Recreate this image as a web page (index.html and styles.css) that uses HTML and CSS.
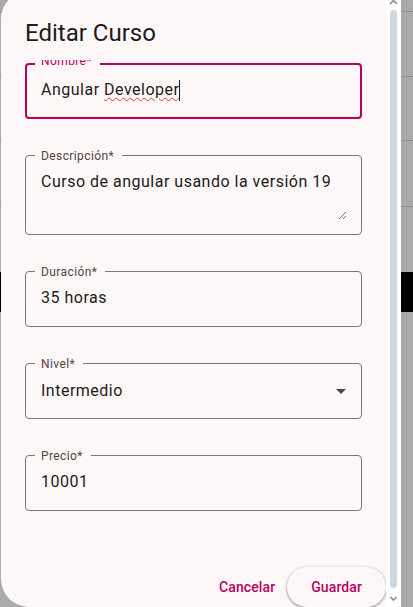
FILE: index.html
```html
<!DOCTYPE html>
<html lang="es">
<head>
<meta charset="utf-8">
<title>Editar Curso</title>
<link rel="stylesheet" href="styles.css">
</head>
<body>
<div class="screen">
  <div class="dialog">
    <h2 class="title">Editar Curso</h2>
    <div class="content">
      <div class="field focused">
        <span class="label">Nombre*</span>
        <div class="value">Angular <span class="typo">Developer</span><span class="caret"></span></div>
      </div>
      <div class="field area">
        <span class="label">Descripción*</span>
        <div class="value">Curso de angular usando la versión 19</div>
        <svg class="grip" width="8" height="8" viewBox="0 0 8 8"><path d="M1 8 L8 1 M5 8 L8 5" stroke="#6f6f6f" stroke-width="1" fill="none"/></svg>
      </div>
      <div class="field">
        <span class="label">Duración*</span>
        <div class="value">35 horas</div>
      </div>
      <div class="field select">
        <span class="label">Nivel*</span>
        <div class="value">Intermedio</div>
        <span class="arrow"></span>
      </div>
      <div class="field">
        <span class="label">Precio*</span>
        <div class="value">10001</div>
      </div>
    </div>
    <div class="actions">
      <button class="btn-text">Cancelar</button>
      <button class="btn-elev">Guardar</button>
    </div>
  </div>
  <div class="scrollbar">
    <svg class="sb-up" width="15" height="8" viewBox="0 0 15 8"><path d="M4 4 L7.5 0.5 L11 4" stroke="#8a8a8a" stroke-width="1.6" fill="none"/></svg>
    <div class="thumb"></div>
    <svg class="sb-down" width="15" height="19" viewBox="0 0 15 19"><path d="M4.5 9 L7.5 12 L10.5 9" stroke="#8a8a8a" stroke-width="1.6" fill="none"/></svg>
  </div>
  <div class="rest"></div>
</div>
</body>
</html>
```
FILE: styles.css
```css
* { box-sizing: border-box; }
html, body { margin: 0; height: 607px; overflow: hidden; }
body {
  font-family: Roboto, "Noto Sans", sans-serif;
  background: linear-gradient(to bottom,
    #aaaaaa 0 11px, #8f8f8f 11px 12px,
    #aaaaaa 12px 76px, #8f8f8f 76px 77px,
    #aaaaaa 77px 140px, #8f8f8f 140px 141px,
    #aaaaaa 141px 206px, #8f8f8f 206px 207px,
    #aaaaaa 207px 272px, #000000 272px 312px,
    #aaaaaa 312px 607px);
}
.screen { display: flex; height: 607px; padding-left: 1px; }
.dialog {
  flex: none;
  width: 385px;
  height: 616px;
  margin-top: -9px;
  background: #fdf7f7;
  border-radius: 28px 0 0 28px;
  display: flex;
  flex-direction: column;
  overflow: hidden;
}
.title {
  margin: 0;
  flex: none;
  height: 69px;
  padding: 26px 24px 0;
  font-size: 24px;
  line-height: 32px;
  font-weight: 400;
  color: #1f1a1c;
}
.content {
  flex: 1;
  overflow: hidden;
  padding: 3px 24px 0;
  display: flex;
  flex-direction: column;
  gap: 36px;
}
.field {
  position: relative;
  flex: none;
  height: 56px;
  border: 1px solid #857375;
  border-radius: 4px;
  padding: 14px 15px;
}
.field.focused { border: 2px solid #b8005c; padding: 13px 14px; }
.field.area { height: 80px; display: flex; flex-direction: column; padding-bottom: 15px; }
.field.select { display: flex; align-items: center; justify-content: space-between; padding-top: 0; padding-bottom: 0; }
.label {
  position: absolute;
  top: -8px;
  left: 9px;
  padding: 0 8px 0 6px;
  background: #fdf7f7;
  font-size: 12px;
  line-height: 16px;
  letter-spacing: 0.4px;
  color: #534346;
}
.focused .label { top: -12px; left: 8px; color: #b8005c; }
.value {
  font-size: 16px;
  line-height: 24px;
  letter-spacing: 0.5px;
  color: #1f1a1c;
  white-space: nowrap;
}
.typo {
  text-decoration: underline wavy #f03c3c;
  text-decoration-thickness: 1px;
  text-underline-offset: 2px;
}
.caret {
  display: inline-block;
  width: 1px;
  height: 21px;
  background: #1f1a1c;
  vertical-align: -6px;
}
.grip { align-self: flex-end; margin-top: auto; }
.arrow {
  width: 0; height: 0;
  border-left: 5px solid transparent;
  border-right: 5px solid transparent;
  border-top: 5px solid #534346;
}
.actions {
  flex: none;
  height: 40px;
  display: flex;
  justify-content: flex-end;
  align-items: center;
}
.btn-text, .btn-elev {
  font: inherit;
  font-size: 14px;
  font-weight: 500;
  letter-spacing: 0.1px;
  height: 40px;
  border: 0;
  color: #b8005c;
}
.btn-text { background: transparent; padding: 0 12px; }
.btn-elev {
  background: #fdf7f8;
  padding: 0 24px;
  border-radius: 20px;
  box-shadow: 0 1px 2px rgba(0,0,0,0.3), 0 1px 3px 1px rgba(0,0,0,0.15);
}
.scrollbar {
  flex: none;
  width: 15px;
  height: 607px;
  background: #ffffff;
  display: flex;
  flex-direction: column;
  align-items: center;
}
.sb-up { flex: none; }
.thumb {
  flex: 1;
  width: 7px;
  margin-top: 2px;
  background: #ccd8e2;
  border-radius: 4px;
}
.sb-down { flex: none; }
.rest { flex: 1; }
```
